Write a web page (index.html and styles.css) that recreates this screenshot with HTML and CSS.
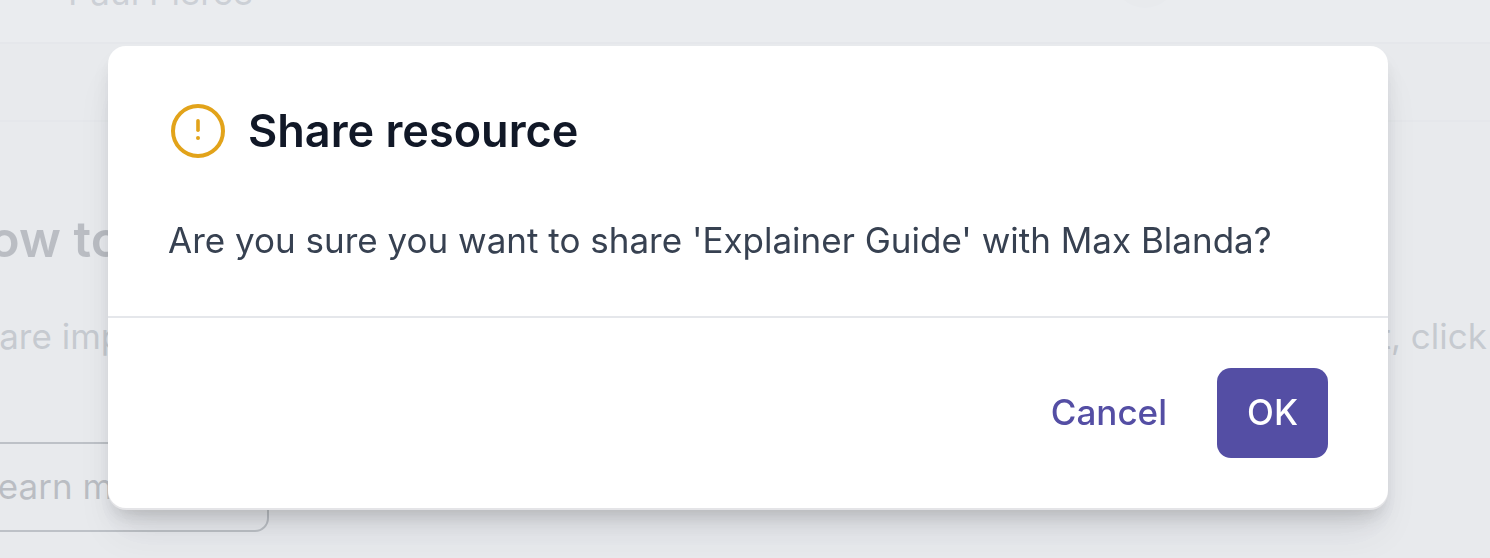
FILE: index.html
```html
<!DOCTYPE html>
<html lang="en">
<head>
    <meta charset="UTF-8">
    <title>Share resource</title>
    <link rel="stylesheet" href="styles.css">
</head>
<body>
    <div class="page">
        <header class="topbar">
            <span class="user-name">Paul Pierce</span>
            <span class="avatar"></span>
        </header>
        <div class="subbar"></div>
        <section class="content">
            <h2 class="content-title">How to share</h2>
            <div class="content-row">
                <span>Share important resources with your team</span>
                <span>To share it, click</span>
            </div>
            <a class="learn-btn">Learn more</a>
        </section>
    </div>

    <div class="overlay"></div>

    <div class="modal">
        <div class="modal-head">
            <svg class="warn-icon" viewBox="0 0 56 56" fill="none" stroke="#e2a31a" stroke-linecap="round">
                <circle cx="28" cy="28" r="25" stroke-width="4"/>
                <path d="M28 17.8v9.4" stroke-width="3.6"/>
                <circle cx="28" cy="35" r="2" fill="#e2a31a" stroke="none"/>
            </svg>
            <h1 class="modal-title">Share resource</h1>
        </div>
        <p class="modal-text">Are you sure you want to share 'Explainer Guide' with Max Blanda?</p>
        <div class="modal-foot">
            <button class="btn-cancel">Cancel</button>
            <button class="btn-ok">OK</button>
        </div>
    </div>
</body>
</html>
```

FILE: styles.css
```css
* {
    box-sizing: border-box;
}
html, body {
    margin: 0;
    height: 100%;
    overflow: hidden;
}
body {
    font-family: Inter, "Liberation Sans", sans-serif;
    background-color: #f3f4f6;
    color: #111827;
}
.page {
    height: 558px;
    overflow: hidden;
}
.topbar {
    height: 44px;
    background-color: #ffffff;
    border-bottom: 2px solid #e5e7eb;
    display: flex;
    justify-content: space-between;
    align-items: flex-end;
    padding: 0 313px 0 68px;
}
.user-name {
    font-size: 35px;
    line-height: 40px;
    margin-bottom: 30px;
    color: #6b7280;
}
.avatar {
    width: 64px;
    height: 64px;
    border-radius: 50%;
    background-color: #f3f4f6;
    margin-bottom: 34px;
}
.subbar {
    height: 78px;
    border-bottom: 2px solid #e5e7eb;
}
.content {
    padding: 89px 0 0 0;
}
.content-title {
    margin: 0 0 0 -48px;
    font-size: 50px;
    line-height: 56px;
    font-weight: 600;
    color: #111827;
    white-space: nowrap;
}
.content-row {
    display: flex;
    justify-content: space-between;
    margin: 47px 3px 0 -44px;
    font-size: 35px;
    line-height: 44px;
    color: #4b5563;
    white-space: nowrap;
}
.learn-btn {
    display: flex;
    align-items: center;
    width: 331px;
    height: 90px;
    margin: 84px 0 0 -62px;
    padding: 0 38px 2px;
    border: 2px solid #1f2937;
    border-radius: 14px;
    font-size: 35px;
    color: #111827;
}
.overlay {
    position: fixed;
    inset: 0;
    background-color: rgba(229, 231, 235, 0.8);
}
.modal {
    position: fixed;
    left: 108px;
    top: 46px;
    width: 1280px;
    height: 462px;
    background-color: #ffffff;
    border-radius: 18px;
    box-shadow: 0 2px 0 #e4e4e7, 0 30px 40px -10px rgba(0, 0, 0, 0.1), 0 12px 16px -6px rgba(0, 0, 0, 0.1), 0 14px 20px rgba(0, 0, 0, 0.05);
    display: flex;
    flex-direction: column;
}
.modal-head {
    display: flex;
    align-items: center;
    gap: 22px;
    padding: 57px 61px 0 62px;
}
.warn-icon {
    width: 56px;
    height: 56px;
    flex-shrink: 0;
}
.modal-title {
    margin: 0;
    font-size: 45px;
    line-height: 56px;
    font-weight: 600;
    color: #111827;
}
.modal-text {
    margin: 0;
    padding: 57px 60px 52px;
    font-size: 35px;
    line-height: 48px;
    color: #374151;
    border-bottom: 2px solid #e5e7eb;
}
.modal-foot {
    display: flex;
    justify-content: flex-end;
    align-items: center;
    gap: 50px;
    padding: 50px 60px 0 0;
}
.btn-cancel, .btn-ok {
    font-family: inherit;
    font-size: 35px;
    font-weight: 500;
    border: none;
    cursor: pointer;
    padding: 0 0 2px;
}
.btn-cancel {
    background: none;
    color: #544ea4;
}
.btn-ok {
    width: 111px;
    height: 90px;
    background-color: #544ea4;
    color: white;
    border-radius: 14px;
}
```
